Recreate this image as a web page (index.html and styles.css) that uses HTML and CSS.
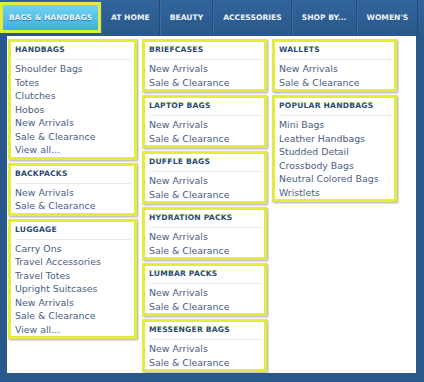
FILE: index.html
```html
<!DOCTYPE html>
<html lang="en">
<head>
    <meta charset="UTF-8">
    <meta name="viewport" content="width=device-width, initial-scale=1.0">
    <title>Bags &amp; Handbags</title>
    <link rel="stylesheet" href="styles.css">
</head>
<body>
    <nav class="topnav">
        <a class="tab active" href="#">BAGS &amp; HANDBAGS</a>
        <a class="tab" href="#">AT HOME</a>
        <a class="tab" href="#">BEAUTY</a>
        <a class="tab" href="#">ACCESSORIES</a>
        <a class="tab" href="#">SHOP BY...</a>
        <a class="tab" href="#">WOMEN'S</a>
    </nav>

    <div class="dropdown">
        <!-- column 1 -->
        <div class="col">
            <div class="group">
                <h3>HANDBAGS</h3>
                <ul>
                    <li><a href="#">Shoulder Bags</a></li>
                    <li><a href="#">Totes</a></li>
                    <li><a href="#">Clutches</a></li>
                    <li><a href="#">Hobos</a></li>
                    <li><a href="#">New Arrivals</a></li>
                    <li><a href="#">Sale &amp; Clearance</a></li>
                    <li><a href="#">View all...</a></li>
                </ul>
            </div>
            <div class="group">
                <h3>BACKPACKS</h3>
                <ul>
                    <li><a href="#">New Arrivals</a></li>
                    <li><a href="#">Sale &amp; Clearance</a></li>
                </ul>
            </div>
            <div class="group">
                <h3>LUGGAGE</h3>
                <ul>
                    <li><a href="#">Carry Ons</a></li>
                    <li><a href="#">Travel Accessories</a></li>
                    <li><a href="#">Travel Totes</a></li>
                    <li><a href="#">Upright Suitcases</a></li>
                    <li><a href="#">New Arrivals</a></li>
                    <li><a href="#">Sale &amp; Clearance</a></li>
                    <li><a href="#">View all...</a></li>
                </ul>
            </div>
        </div>

        <!-- column 2 -->
        <div class="col">
            <div class="group">
                <h3>BRIEFCASES</h3>
                <ul>
                    <li><a href="#">New Arrivals</a></li>
                    <li><a href="#">Sale &amp; Clearance</a></li>
                </ul>
            </div>
            <div class="group">
                <h3>LAPTOP BAGS</h3>
                <ul>
                    <li><a href="#">New Arrivals</a></li>
                    <li><a href="#">Sale &amp; Clearance</a></li>
                </ul>
            </div>
            <div class="group">
                <h3>DUFFLE BAGS</h3>
                <ul>
                    <li><a href="#">New Arrivals</a></li>
                    <li><a href="#">Sale &amp; Clearance</a></li>
                </ul>
            </div>
            <div class="group">
                <h3>HYDRATION PACKS</h3>
                <ul>
                    <li><a href="#">New Arrivals</a></li>
                    <li><a href="#">Sale &amp; Clearance</a></li>
                </ul>
            </div>
            <div class="group">
                <h3>LUMBAR PACKS</h3>
                <ul>
                    <li><a href="#">New Arrivals</a></li>
                    <li><a href="#">Sale &amp; Clearance</a></li>
                </ul>
            </div>
            <div class="group">
                <h3>MESSENGER BAGS</h3>
                <ul>
                    <li><a href="#">New Arrivals</a></li>
                    <li><a href="#">Sale &amp; Clearance</a></li>
                </ul>
            </div>
        </div>

        <!-- column 3 -->
        <div class="col">
            <div class="group">
                <h3>WALLETS</h3>
                <ul>
                    <li><a href="#">New Arrivals</a></li>
                    <li><a href="#">Sale &amp; Clearance</a></li>
                </ul>
            </div>
            <div class="group">
                <h3>POPULAR HANDBAGS</h3>
                <ul>
                    <li><a href="#">Mini Bags</a></li>
                    <li><a href="#">Leather Handbags</a></li>
                    <li><a href="#">Studded Detail</a></li>
                    <li><a href="#">Crossbody Bags</a></li>
                    <li><a href="#">Neutral Colored Bags</a></li>
                    <li><a href="#">Wristlets</a></li>
                </ul>
            </div>
        </div>
    </div>
</body>
</html>
```

FILE: styles.css
```css
body {
    margin: 0;
    padding: 0;
    background-color: #28588c;
    font-family: "DejaVu Sans", Verdana, sans-serif;
}
.topnav {
    display: flex;
    height: 36px;
    background: linear-gradient(#31659c, #29588b);
}
.tab {
    display: flex;
    align-items: center;
    padding: 0 9px 1px 10px;
    color: #eef3f8;
    font-size: 7.6px;
    font-weight: bold;
    text-decoration: none;
    white-space: nowrap;
    border-right: 1px solid #214a78;
    box-shadow: inset 1px 0 0 #3a6ca2;
}
.tab.active {
    width: 95px;
    padding: 0;
    justify-content: center;
    margin: 2px 0 3px;
    border: 3px solid #e4ec38;
    box-shadow: none;
    background: linear-gradient(#72d3f0, #3fb0dc);
    text-shadow: 0 1px 1px #2577a8;
}
.dropdown {
    display: grid;
    grid-template-columns: 129px 125px 125px;
    column-gap: 5px;
    align-items: start;
    height: 337px;
    margin: 0 8px 0 7px;
    padding: 3px 0 0 1px;
    box-sizing: border-box;
    background-color: #ffffff;
}
.col {
    display: flex;
    flex-direction: column;
    gap: 3px;
}
.group {
    padding: 3px 3px 0 4px;
    border: 3px solid #e3eb3c;
    box-shadow: 1px 1px 2px rgba(60, 60, 40, 0.45);
    background-color: #ffffff;
}
.group h3 {
    margin: 0;
    padding-bottom: 4px;
    border-bottom: 1px solid #e8e8e8;
    color: #2b4a74;
    font-size: 7.6px;
    line-height: 10px;
    letter-spacing: 0.2px;
}
.group ul {
    list-style: none;
    margin: 2px 0 0;
    padding: 0;
}
.group a {
    display: block;
    color: #4a6084;
    font-size: 9.4px;
    line-height: 13.5px;
    text-decoration: none;
    white-space: nowrap;
}
```
